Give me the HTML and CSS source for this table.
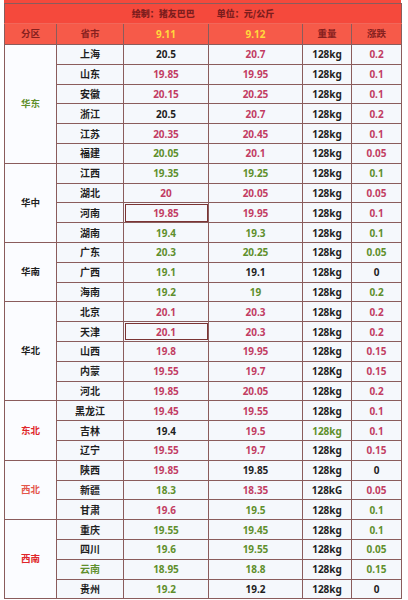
FILE: index.html
```html
<!DOCTYPE html>
<html lang="zh">
<head>
<meta charset="utf-8">
<title>猪价表</title>
<link rel="stylesheet" href="styles.css">
</head>
<body>
<div class="sheet">
<div class="topstrip"></div>
<table class="price">
<colgroup>
<col class="c1"><col class="c2"><col class="c3"><col class="c4"><col class="c5"><col class="c6">
</colgroup>
<thead>
<tr class="title"><th colspan="6">绘制：猪友巴巴<span class="gap"></span>单位：元/公斤</th></tr>
<tr class="head"><th>分区</th><th>省市</th><th class="y">9.11</th><th class="y">9.12</th><th>重量</th><th>涨跌</th></tr>
</thead>
<tbody>
<tr class="first"><td rowspan="6" class="reg g">华东</td><td>上海</td><td class="k">20.5</td><td class="p">20.7</td><td>128kg</td><td class="p">0.2</td></tr>
<tr><td>山东</td><td class="p">19.85</td><td class="p">19.95</td><td>128kg</td><td class="p">0.1</td></tr>
<tr><td>安徽</td><td class="p">20.15</td><td class="p">20.25</td><td>128kg</td><td class="p">0.1</td></tr>
<tr><td>浙江</td><td class="k">20.5</td><td class="p">20.7</td><td>128kg</td><td class="p">0.2</td></tr>
<tr><td>江苏</td><td class="p">20.35</td><td class="p">20.45</td><td>128kg</td><td class="p">0.1</td></tr>
<tr><td>福建</td><td class="g">20.05</td><td class="p">20.1</td><td>128kg</td><td class="p">0.05</td></tr>

<tr class="first"><td rowspan="4" class="reg">华中</td><td>江西</td><td class="g">19.35</td><td class="g">19.25</td><td>128kg</td><td class="g">0.1</td></tr>
<tr><td>湖北</td><td class="p">20</td><td class="p">20.05</td><td>128kg</td><td class="p">0.05</td></tr>
<tr><td>河南</td><td class="p box">19.85</td><td class="p">19.95</td><td>128kg</td><td class="p">0.1</td></tr>
<tr><td>湖南</td><td class="g">19.4</td><td class="g">19.3</td><td>128kg</td><td class="g">0.1</td></tr>

<tr class="first"><td rowspan="3" class="reg">华南</td><td>广东</td><td class="g">20.3</td><td class="g">20.25</td><td>128kg</td><td class="g">0.05</td></tr>
<tr><td>广西</td><td class="g">19.1</td><td class="k">19.1</td><td>128kg</td><td class="k">0</td></tr>
<tr><td>海南</td><td class="g">19.2</td><td class="g">19</td><td>128kg</td><td class="g">0.2</td></tr>

<tr class="first"><td rowspan="5" class="reg">华北</td><td>北京</td><td class="p">20.1</td><td class="p">20.3</td><td>128kg</td><td class="p">0.2</td></tr>
<tr><td>天津</td><td class="p box">20.1</td><td class="p">20.3</td><td>128kg</td><td class="p">0.2</td></tr>
<tr><td>山西</td><td class="p">19.8</td><td class="p">19.95</td><td>128kg</td><td class="p">0.15</td></tr>
<tr><td>内蒙</td><td class="p">19.55</td><td class="p">19.7</td><td>128Kg</td><td class="p">0.15</td></tr>
<tr><td>河北</td><td class="p">19.85</td><td class="p">20.05</td><td>128kg</td><td class="p">0.2</td></tr>

<tr class="first"><td rowspan="3" class="reg r">东北</td><td>黑龙江</td><td class="p">19.45</td><td class="p">19.55</td><td>128kg</td><td class="p">0.1</td></tr>
<tr><td>吉林</td><td class="k">19.4</td><td class="p">19.5</td><td class="g">128kg</td><td class="p">0.1</td></tr>
<tr><td>辽宁</td><td class="p">19.55</td><td class="p">19.7</td><td>128kg</td><td class="p">0.15</td></tr>

<tr class="first"><td rowspan="3" class="reg o">西北</td><td>陕西</td><td class="p">19.85</td><td class="k">19.85</td><td>128kg</td><td class="k">0</td></tr>
<tr><td>新疆</td><td class="g">18.3</td><td class="p">18.35</td><td>128kG</td><td class="p">0.05</td></tr>
<tr><td>甘肃</td><td class="p">19.6</td><td class="g">19.5</td><td>128kg</td><td class="g">0.1</td></tr>

<tr class="first"><td rowspan="4" class="reg r">西南</td><td>重庆</td><td class="g">19.55</td><td class="g">19.45</td><td>128kg</td><td class="g">0.1</td></tr>
<tr><td>四川</td><td class="g">19.6</td><td class="g">19.55</td><td>128kg</td><td class="g">0.05</td></tr>
<tr><td class="g">云南</td><td class="g">18.95</td><td class="g">18.8</td><td>128kg</td><td class="g">0.15</td></tr>
<tr><td>贵州</td><td class="g">19.2</td><td class="k">19.2</td><td>128kg</td><td class="k">0</td></tr>
</tbody>
</table>
</div>
</body>
</html>
```

FILE: styles.css
```css
html, body {
  margin: 0;
  padding: 0;
  background: #ffffff;
}

.sheet {
  padding-left: 4px;
  width: 397px;
}

.topstrip {
  height: 3px;
  background: #f5493c;
}

.price {
  border-collapse: collapse;
  table-layout: fixed;
  width: 397px;
  font-family: "Noto Sans", "Noto Sans CJK SC", sans-serif;
  font-weight: 700;
  font-size: 10px;
  color: #1f1f1f;
}

.c1 { width: 52px; }
.c2 { width: 67px; }
.c3 { width: 85px; }
.c4 { width: 94px; }
.c5 { width: 49px; }
.c6 { width: 50px; }

.price th,
.price td {
  border: 1px solid #8a5c5c;
  padding: 0;
  text-align: center;
  vertical-align: middle;
  line-height: 12px;
  white-space: nowrap;
  overflow: hidden;
}

.title th {
  height: 19px;
  background: #f5493c;
  color: #7d1d1d;
  font-size: 9px;
  border-bottom-color: #f2675a;
  font-family: "Noto Sans CJK SC", sans-serif;
  font-weight: 900;
}

.gap {
  display: inline-block;
  width: 22px;
}

.head th {
  height: 20px;
  background: #f65a49;
  color: #86201e;
  font-size: 9.5px;
  font-family: "Noto Sans", "Noto Sans CJK SC", sans-serif;
}

.head th.y {
  color: #ffd93c;
  font-size: 10px;
}

.price tbody tr {
  height: 19.8px;
}

.price tbody td {
  background: #f5f8fc;
}

.price tbody td.reg {
  background: #fbfcff;
  font-size: 9.5px;
}

.p { color: #c23d63; }
.g { color: #5f8f2c; }
.k { color: #1f1f1f; }
.r { color: #e0262a; }
.o { color: #e4574c; }

.price td.box {
  outline: 1px solid #7a3434;
  outline-offset: -2px;
}
```
